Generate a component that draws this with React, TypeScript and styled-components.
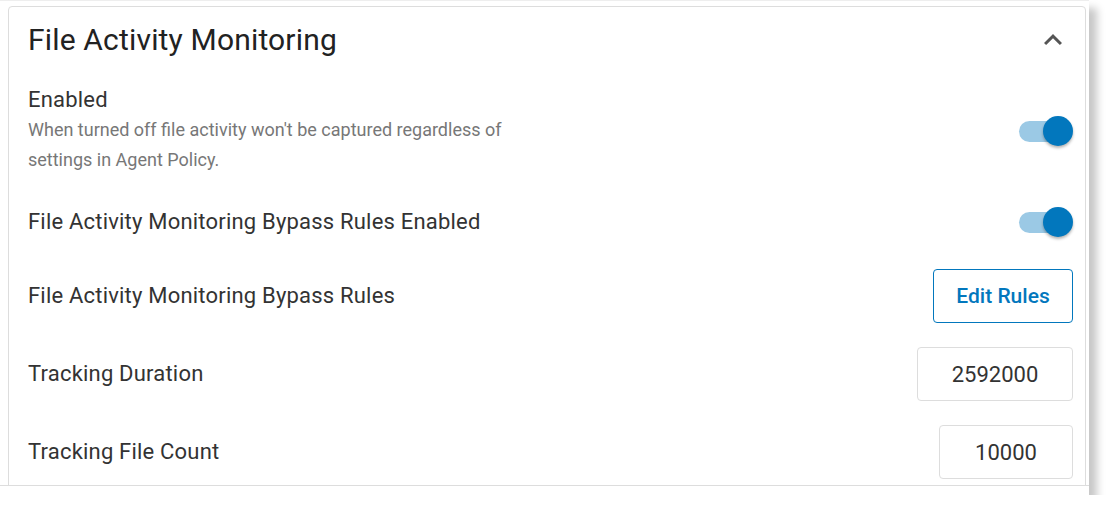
import React from "react";
import styled, { createGlobalStyle } from "styled-components";

const Global = createGlobalStyle`
  html, body { margin: 0; padding: 0; background: #ffffff; }
  body { font-family: Roboto, "Noto Sans", Arial, sans-serif; }
  * { box-sizing: border-box; }
`;

const Frame = styled.div`
  width: 1089px;
  height: 495px;
  background: #ffffff;
  border-top: 1px solid #eeeeee;
  box-shadow: 8px 8px 8px rgba(0, 0, 0, 0.22);
`;

const Viewport = styled.div`
  height: 486px;
  margin-top: -1px;
  border-bottom: 1px solid #dddddd;
  overflow: hidden;
  padding: 6px 3px 0 8px;
`;

const Card = styled.section`
  border: 1px solid #dddddd;
  border-radius: 4px;
  padding: 15px 12px 24px 19px;
  background: #ffffff;
`;

const Header = styled.header`
  display: flex;
  align-items: center;
  justify-content: space-between;
  height: 36px;
  margin-bottom: 29px;
`;

const Title = styled.h2`
  margin: 0;
  font-size: 30px;
  line-height: 36px;
  font-weight: 400;
  letter-spacing: 0.17px;
  color: #222222;
`;

const CollapseButton = styled.button`
  width: 40px;
  height: 36px;
  padding: 0;
  border: none;
  background: transparent;
  display: flex;
  align-items: center;
  justify-content: center;
  color: #555555;
  cursor: pointer;
`;

const List = styled.div`
  display: flex;
  flex-direction: column;
`;

const Row = styled.div<{ $height: number; $gap: number }>`
  display: flex;
  align-items: center;
  justify-content: space-between;
  min-height: ${(p) => p.$height}px;
  margin-top: ${(p) => p.$gap}px;
`;

const TextBlock = styled.div`
  display: flex;
  flex-direction: column;
`;

const Label = styled.div`
  font-size: 22px;
  line-height: 26px;
  letter-spacing: 0.2px;
  color: #333333;
`;

const Description = styled.div`
  margin-top: 2px;
  width: 500px;
  font-size: 18px;
  line-height: 30px;
  color: #777777;
`;

const SwitchRoot = styled.button`
  position: relative;
  width: 54px;
  height: 30px;
  padding: 0;
  border: none;
  background: transparent;
  cursor: pointer;
`;

const Track = styled.span<{ $on: boolean }>`
  position: absolute;
  left: 0;
  top: 5px;
  width: 41px;
  height: 21px;
  border-radius: 11px;
  background: ${(p) => (p.$on ? "#9bc9e5" : "#c4c4c4")};
`;

const Thumb = styled.span<{ $on: boolean }>`
  position: absolute;
  top: 0;
  ${(p) => (p.$on ? "right: 0;" : "left: 0;")}
  width: 30px;
  height: 30px;
  border-radius: 50%;
  background: ${(p) => (p.$on ? "#0277bd" : "#f5f5f5")};
  box-shadow: 0 2px 3px rgba(0, 0, 0, 0.3);
`;

const OutlineButton = styled.button`
  width: 140px;
  height: 54px;
  border: 1px solid #0277bd;
  border-radius: 4px;
  background: #ffffff;
  color: #0277bd;
  font-family: Roboto, "Noto Sans", Arial, sans-serif;
  font-size: 21px;
  font-weight: 500;
  cursor: pointer;
`;

const NumberInput = styled.input<{ $width: number }>`
  width: ${(p) => p.$width}px;
  height: 54px;
  border: 1px solid #dddddd;
  border-radius: 4px;
  background: #ffffff;
  color: #333333;
  font-family: Roboto, "Noto Sans", Arial, sans-serif;
  font-size: 22px;
  text-align: center;
  outline: none;
`;

function Switch({ on }: { on: boolean }) {
  return (
    <SwitchRoot aria-pressed={on}>
      <Track $on={on} />
      <Thumb $on={on} />
    </SwitchRoot>
  );
}

function ChevronUp() {
  return (
    <svg width="36" height="36" viewBox="0 0 24 24" fill="currentColor">
      <path d="M12 8l-6 6 1.41 1.41L12 10.83l4.59 4.58L18 14z" />
    </svg>
  );
}

export default function App() {
  return (
    <>
      <Global />
      <Frame>
        <Viewport>
          <Card>
            <Header>
              <Title>File Activity Monitoring</Title>
              <CollapseButton aria-label="Collapse">
                <ChevronUp />
              </CollapseButton>
            </Header>
            <List>
              <Row $height={88} $gap={0}>
                <TextBlock>
                  <Label>Enabled</Label>
                  <Description>
                    When turned off file activity won't be captured regardless of settings in Agent Policy.
                  </Description>
                </TextBlock>
                <Switch on />
              </Row>
              <Row $height={46} $gap={24}>
                <Label>File Activity Monitoring Bypass Rules Enabled</Label>
                <Switch on />
              </Row>
              <Row $height={54} $gap={24}>
                <Label>File Activity Monitoring Bypass Rules</Label>
                <OutlineButton>Edit Rules</OutlineButton>
              </Row>
              <Row $height={54} $gap={24}>
                <Label>Tracking Duration</Label>
                <NumberInput $width={156} defaultValue="2592000" />
              </Row>
              <Row $height={54} $gap={24}>
                <Label>Tracking File Count</Label>
                <NumberInput $width={134} defaultValue="10000" />
              </Row>
            </List>
          </Card>
        </Viewport>
      </Frame>
    </>
  );
}
